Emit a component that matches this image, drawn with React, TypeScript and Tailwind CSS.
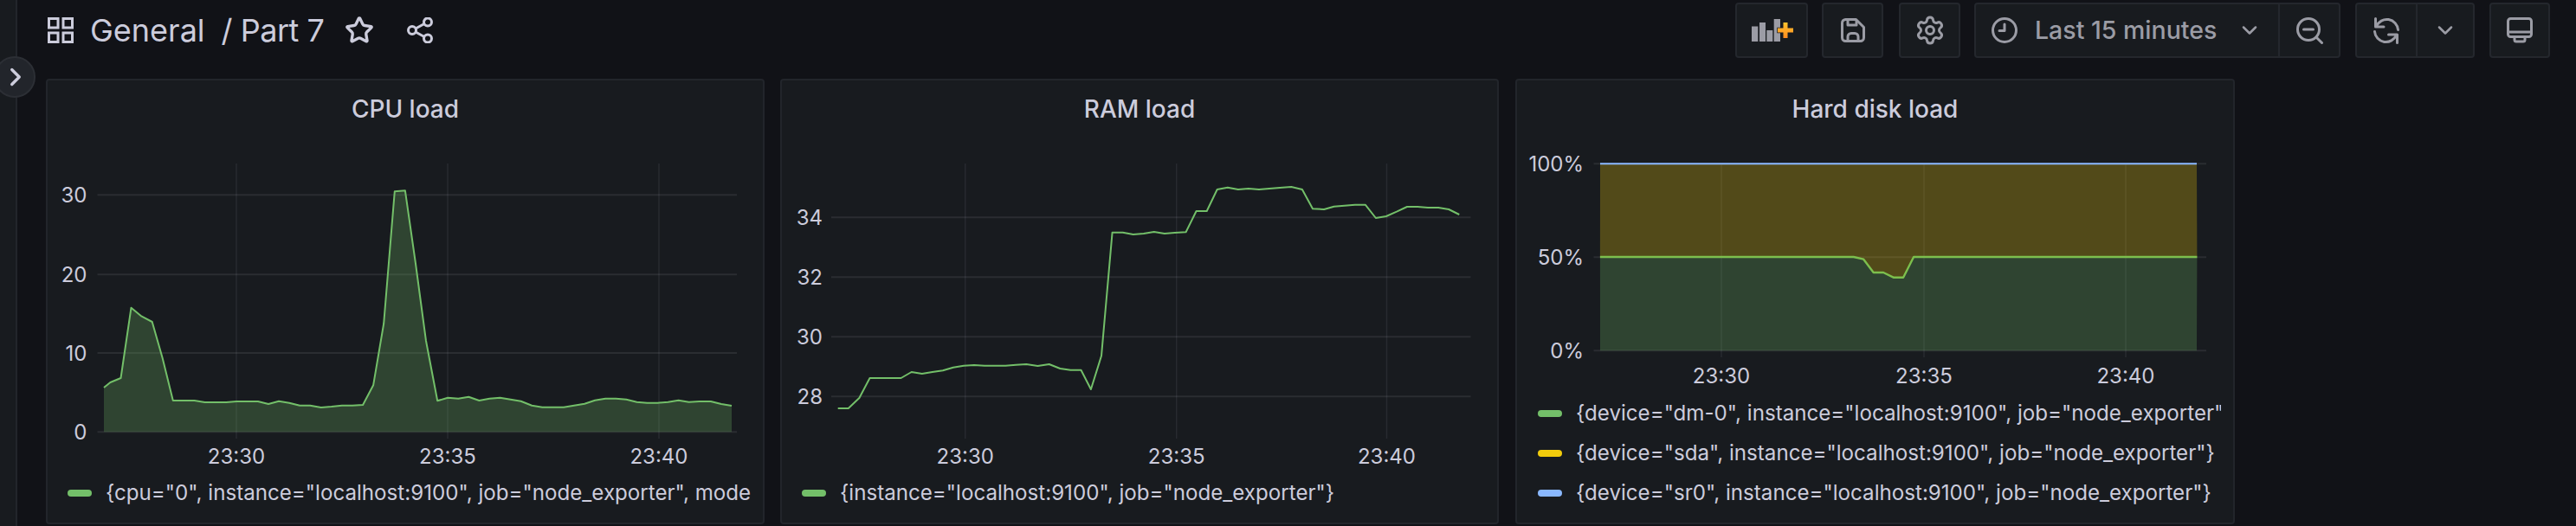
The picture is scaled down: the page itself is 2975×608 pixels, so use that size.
import { Star, Settings, ChevronDown, ChevronRight } from "lucide-react";

// chart points were read off zoomed crops of the screenshot
const sx = (x: number) => x / 1.742;

const cpuRaw: [number, number][] = [
  [209, 432], [222, 414], [243, 399], [264, 155], [285, 185], [306, 204], [327, 330], [348, 477], [370, 477], [391, 477],
  [412, 483], [433, 483], [455, 483], [476, 480], [497, 480], [519, 480], [540, 489], [561, 479], [582, 485], [603, 494],
  [624, 494], [646, 501], [667, 498], [688, 494], [709, 494], [730, 492], [751, 424], [772, 210], [794, -248], [815, -251],
  [836, 0], [857, 270], [880, 478], [901, 467], [922, 470], [943, 464], [964, 477], [985, 470], [1006, 467], [1027, 473],
  [1048, 479], [1070, 494], [1091, 500], [1112, 500], [1134, 500], [1155, 494], [1176, 488], [1197, 476], [1218, 470], [1239, 470],
  [1260, 473], [1281, 482], [1302, 485], [1323, 485], [1344, 482], [1365, 476], [1386, 482], [1407, 480], [1430, 480], [1451, 489], [1472, 495],
];
// panel one starts at x 53, y 91
const cpuPts = cpuRaw.map(([x, y]) => [sx(x) - 53, 304 + y / 3 - 91]);

const ramLow: [number, number][] = [
  [118, 504], [139, 504], [161, 468], [182, 399], [203, 399], [224, 399], [245, 399], [266, 378], [287, 384], [308, 378],
  [329, 373], [350, 362], [371, 356], [392, 354], [413, 356], [434, 356], [455, 356], [476, 353], [497, 351], [520, 357],
  [543, 351], [565, 366], [586, 371], [607, 371], [627, 438], [648, 322],
];
const ramHigh: [number, number][] = [
  [670, 566], [691, 566], [712, 573], [733, 570], [754, 564], [775, 570], [796, 567], [818, 565], [839, 492], [860, 492],
  [881, 417], [902, 410], [923, 417], [944, 414], [965, 417], [986, 414], [1007, 411], [1030, 408], [1052, 417], [1073, 484],
  [1096, 486], [1116, 476], [1137, 473], [1158, 470], [1179, 470], [1200, 516], [1221, 510], [1242, 494], [1263, 477], [1284, 477],
  [1305, 480], [1326, 480], [1347, 486], [1368, 504],
];
const ramPts = [
  ...ramLow.map(([x, y]) => [sx(x) + 900 - 901, 304 + y / 3 - 91]),
  ...ramHigh.map(([x, y]) => [sx(x) + 900 - 901, 80 + y / 3 - 91]),
];

const diskRaw: [number, number][] = [
  [188, 651], [698, 651], [718, 659], [738, 705], [758, 705], [778, 722], [798, 722], [819, 651], [1389, 651],
];
const diskPts = diskRaw.map(([x, y]) => [sx(x) + 1740 - 1750, 80 + y / 3 - 91]);

const toPath = (pts: number[][]) => pts.map(([x, y]) => `${x.toFixed(1)},${y.toFixed(1)}`).join(" ");

type Tick = { label: string; pos: number };

function Axes({
  gridLeft,
  gridRight,
  labelRight,
  yTicks,
  xTicks,
  top,
  bottom,
  labelY,
}: {
  gridLeft: number;
  gridRight: number;
  labelRight: number;
  yTicks: Tick[];
  xTicks: Tick[];
  top: number;
  bottom: number;
  labelY: number;
}) {
  return (
    <>
      {yTicks.map((t) => (
        <g key={t.label}>
          <line x1={gridLeft} x2={gridRight} y1={t.pos} y2={t.pos} stroke="#ccccdc" strokeOpacity={0.1} strokeWidth={2} />
          <text x={labelRight} y={t.pos + 9} textAnchor="end" fill="#ccccdc" fontSize={24}>
            {t.label}
          </text>
        </g>
      ))}
      {xTicks.map((t) => (
        <g key={t.label}>
          <line x1={t.pos} x2={t.pos} y1={top} y2={bottom} stroke="#ccccdc" strokeOpacity={0.09} strokeWidth={1.5} />
          <text x={t.pos} y={labelY} textAnchor="middle" fill="#ccccdc" fontSize={24}>
            {t.label}
          </text>
        </g>
      ))}
    </>
  );
}

// viewBox keeps the coordinates relative to the panel's outer corner
function Chart({ height, children }: { height: number; children: React.ReactNode }) {
  return (
    <svg width={826} height={height} viewBox={`2 57 826 ${height}`} className="block shrink-0 font-['Inter',sans-serif]">
      {children}
    </svg>
  );
}

function LegendItem({ color, label }: { color: string; label: string }) {
  return (
    <div className="flex h-[46px] items-center overflow-hidden whitespace-nowrap">
      <span className="mr-4 h-2 w-7 shrink-0 rounded-sm" style={{ backgroundColor: color }} />
      <span className="text-[24.15px] leading-[36px] text-[#ccccdc]">{label}</span>
    </div>
  );
}

function Panel({
  title,
  className,
  legendClass,
  chart,
  children,
}: {
  title: string;
  className: string;
  legendClass: string;
  chart: React.ReactNode;
  children: React.ReactNode;
}) {
  return (
    <section className={`flex h-[515px] shrink-0 flex-col rounded-[4px] border-2 border-[#22252b] bg-[#181b1f] ${className}`}>
      <h2 className="mt-[11px] h-[44px] shrink-0 text-center text-[28px] leading-[44px] font-medium text-[#ccccdc]">{title}</h2>
      {chart}
      <div className={`mt-auto flex flex-col pr-[14px] pb-[11px] ${legendClass}`}>{children}</div>
    </section>
  );
}

function ToolButton({ className, children }: { className: string; children: React.ReactNode }) {
  return (
    <div className={`flex h-16 items-center justify-center rounded-[4px] border-2 border-[#24272d] bg-[#181b1f] text-[#9b9ca5] ${className}`}>
      {children}
    </div>
  );
}

function AddPanelIcon() {
  return (
    <svg width={48} height={28} viewBox="0 0 48 28" className="ml-[2px]">
      <defs>
        <linearGradient id="plusFill" x1="0" y1="0" x2="0" y2="1">
          <stop offset="0" stopColor="#ffc42e" />
          <stop offset="1" stopColor="#ff8a1f" />
        </linearGradient>
      </defs>
      <path fill="#9b9ca5" d="M0 9.5h7.3V27H0zM9 5h7v22H9zM17.3 14h7v13h-7zM25.7 1h7.3v26h-7.3z" />
      <path
        d="M36.5 5h5v6.5H48v5h-6.5V23h-5v-6.5H30v-5h6.5z"
        fill="url(#plusFill)"
        stroke="#181b1f"
        strokeWidth={1.5}
        paintOrder="stroke"
      />
    </svg>
  );
}

function SaveIcon() {
  return (
    <svg width={28} height={28} viewBox="0 0 28 28" fill="none" stroke="currentColor" strokeWidth={3} strokeLinejoin="round" strokeLinecap="round">
      <path d="M5.5 1.5h12l9 9v12a4 4 0 0 1-4 4h-17a4 4 0 0 1-4-4v-17a4 4 0 0 1 4-4z" />
      <path d="M8 1.5v6.5h10v-5" />
      <path d="M8 26.5v-5a4 4 0 0 1 4-4h4a4 4 0 0 1 4 4v5" />
    </svg>
  );
}

function ClockIcon() {
  return (
    <svg width={30} height={30} viewBox="0 0 30 30" className="shrink-0" fill="none" stroke="currentColor" strokeWidth={3} strokeLinecap="round" strokeLinejoin="round">
      <circle cx={15} cy={15} r={13.5} />
      <path d="M15 8v7.5H9" />
    </svg>
  );
}

function ZoomOutIcon() {
  return (
    <svg width={31} height={31} viewBox="0 0 31 31" fill="none" stroke="currentColor" strokeWidth={3} strokeLinecap="round">
      <circle cx={14} cy={14} r={12.5} />
      <path d="M8.5 14h11M23.5 23.5l6 6" />
    </svg>
  );
}

function RefreshIcon() {
  return (
    <svg width={30} height={31} viewBox="0 0 30 31" fill="none" stroke="currentColor" strokeWidth={3} strokeLinecap="round" strokeLinejoin="round">
      <path d="M2.5 1.5v9.5H12" />
      <path d="M3.5 10.5A13 13 0 0 1 28.5 14.5" />
      <path d="M27.5 29.5V20H17.5" />
      <path d="M1.5 16.5A13 13 0 0 0 26.5 20.5" />
    </svg>
  );
}

function MonitorIcon() {
  return (
    <svg width={30} height={30} viewBox="0 0 30 30" fill="none" stroke="currentColor" strokeWidth={3} strokeLinecap="round" strokeLinejoin="round">
      <rect x={1.5} y={1.5} width={27} height={21} rx={3} />
      <path d="M1.5 17h27" />
      <path d="M9 23v3a2 2 0 0 0 2 2h8a2 2 0 0 0 2-2v-3" />
    </svg>
  );
}

export default function App() {
  const cpuFill = `${toPath(cpuPts)} ${(845 - 53).toFixed(1)},408.3 ${(120 - 53).toFixed(1)},408.3`;
  const greenFill = `${toPath(diskPts)} ${(2537 - 1750).toFixed(1)},314.3 ${(1848 - 1750).toFixed(1)},314.3`;
  const yellowFill = `${(1848 - 1750).toFixed(1)},98.3 ${(2537 - 1750).toFixed(1)},98.3 ${toPath([...diskPts].reverse())}`;

  return (
    <div className="relative flex h-[608px] w-[2975px] overflow-hidden bg-[#111217] font-['Inter',sans-serif]">
      <aside className="h-full w-5 shrink-0 border-r-2 border-[#22252b] bg-[#181b1f]" />
      <button className="absolute left-[-7px] top-[65px] z-20 flex h-12 w-12 items-center justify-center rounded-full border-2 border-[#2c2f35] bg-[#22252b] pl-[1px] text-[#ccccdc]">
        <ChevronRight size={34} strokeWidth={2.4} />
      </button>

      <main className="min-w-0 flex-1 pl-[33px]">
        <header className="flex h-[91px] items-start">
          <div className="mt-[20px] flex h-[30px] items-center text-[#ccccdc]">
            <svg width={30} height={30} viewBox="0 0 30 30" className="ml-[2px] shrink-0" fill="none" stroke="#ccccdc" strokeWidth={3}>
              <rect x={1.5} y={1.5} width={10.5} height={10.5} />
              <rect x={18} y={1.5} width={10.5} height={10.5} />
              <rect x={1.5} y={18} width={10.5} height={10.5} />
              <rect x={18} y={18} width={10.5} height={10.5} />
            </svg>
            <span className="ml-[19px] text-[36px] leading-none">General</span>
            <span className="ml-[19px] text-[36px] leading-none tracking-[-0.5px]">/ Part 7</span>
            <Star size={34} strokeWidth={2.4} className="ml-[24px] shrink-0" />
            <svg width={30} height={30} viewBox="0 0 30 30" className="ml-[38px] shrink-0" fill="none" stroke="#ccccdc" strokeWidth={3}>
              <circle cx={6} cy={15} r={4.5} />
              <circle cx={24} cy={5.5} r={4.5} />
              <circle cx={24} cy={24.5} r={4.5} />
              <path d="M10 13 L20 7.5 M10 17 L20 22.5" />
            </svg>
          </div>

          <div className="ml-auto mr-[30px] mt-[3px] flex">
            <ToolButton className="w-[84px]">
              <AddPanelIcon />
            </ToolButton>
            <ToolButton className="ml-4 w-[71px]">
              <SaveIcon />
            </ToolButton>
            <ToolButton className="ml-[18px] w-[71px]">
              <Settings size={36} strokeWidth={2} />
            </ToolButton>
            <div className="ml-4 flex h-16 w-[423px] rounded-[4px] border-2 border-[#24272d] bg-[#181b1f] text-[#9b9ca5]">
              <div className="flex flex-1 items-center border-r-2 border-[#24272d] pl-[18px]">
                <ClockIcon />
                <span className="ml-[20px] text-[28.5px] font-medium whitespace-nowrap">Last 15 minutes</span>
                <ChevronDown size={28} strokeWidth={2.2} className="ml-[24px] shrink-0" />
              </div>
              <div className="flex w-[68px] items-center justify-center">
                <ZoomOutIcon />
              </div>
            </div>
            <div className="ml-[17px] flex h-16 w-[138px] rounded-[4px] border-2 border-[#24272d] bg-[#181b1f] text-[#9b9ca5]">
              <div className="flex w-[70px] items-center justify-center border-r-2 border-[#24272d]">
                <RefreshIcon />
              </div>
              <div className="flex flex-1 items-center justify-center">
                <ChevronDown size={28} strokeWidth={2.2} />
              </div>
            </div>
            <ToolButton className="ml-[17px] w-[70px]">
              <MonitorIcon />
            </ToolButton>
          </div>
        </header>

        <div className="flex gap-[18px]">
          <Panel
            title="CPU load"
            className="w-[830px]"
            legendClass="pl-[23px]"
            chart={
              <Chart height={399}>
                <Axes
                  gridLeft={59.5}
                  gridRight={798}
                  labelRight={47.5}
                  top={98}
                  bottom={416}
                  labelY={445}
                  yTicks={[
                    { label: "30", pos: 134.3 },
                    { label: "20", pos: 226.3 },
                    { label: "10", pos: 317 },
                    { label: "0", pos: 408.3 },
                  ]}
                  xTicks={[
                    { label: "23:30", pos: 220 },
                    { label: "23:35", pos: 464 },
                    { label: "23:40", pos: 708 },
                  ]}
                />
                <polygon points={cpuFill} fill="#73bf69" fillOpacity={0.25} />
                <polyline points={toPath(cpuPts)} fill="none" stroke="#73bf69" strokeWidth={2} strokeLinejoin="round" />
              </Chart>
            }
          >
            <LegendItem color="#73bf69" label={'{cpu="0", instance="localhost:9100", job="node_exporter", mode="idle"}'} />
          </Panel>

          <Panel
            title="RAM load"
            className="mr-px w-[830px]"
            legendClass="pl-[23px]"
            chart={
              <Chart height={399}>
                <Axes
                  gridLeft={59}
                  gridRight={797.5}
                  labelRight={49}
                  top={98}
                  bottom={416}
                  labelY={445}
                  yTicks={[
                    { label: "34", pos: 160.3 },
                    { label: "32", pos: 229.3 },
                    { label: "30", pos: 298.3 },
                    { label: "28", pos: 367.3 },
                  ]}
                  xTicks={[
                    { label: "23:30", pos: 213.7 },
                    { label: "23:35", pos: 457.7 },
                    { label: "23:40", pos: 700.5 },
                  ]}
                />
                <polyline points={toPath(ramPts)} fill="none" stroke="#73bf69" strokeWidth={2} strokeLinejoin="round" />
              </Chart>
            }
          >
            <LegendItem color="#73bf69" label={'{instance="localhost:9100", job="node_exporter"}'} />
          </Panel>

          <Panel
            title="Hard disk load"
            className="w-[831px]"
            legendClass="pl-[24px]"
            chart={
              <Chart height={303}>
                <Axes
                  gridLeft={90.5}
                  gridRight={798}
                  labelRight={79}
                  top={98}
                  bottom={322}
                  labelY={352}
                  yTicks={[
                    { label: "100%", pos: 98.3 },
                    { label: "50%", pos: 206.3 },
                    { label: "0%", pos: 314.3 },
                  ]}
                  xTicks={[
                    { label: "23:30", pos: 238 },
                    { label: "23:35", pos: 472 },
                    { label: "23:40", pos: 705 },
                  ]}
                />
                <polygon points={yellowFill} fill="#f2cc0c" fillOpacity={0.27} />
                <polygon points={greenFill} fill="#73bf69" fillOpacity={0.25} />
                <polyline points={toPath(diskPts)} fill="none" stroke="#7cbf4d" strokeWidth={2.4} strokeLinejoin="round" />
                <line x1={98} x2={787} y1={98.3} y2={98.3} stroke="#8ab8ff" strokeWidth={2} />
              </Chart>
            }
          >
            <LegendItem color="#73bf69" label={'{device="dm-0", instance="localhost:9100", job="node_exporter"}'} />
            <LegendItem color="#f2cc0c" label={'{device="sda", instance="localhost:9100", job="node_exporter"}'} />
            <LegendItem color="#8ab8ff" label={'{device="sr0", instance="localhost:9100", job="node_exporter"}'} />
          </Panel>
        </div>
      </main>
    </div>
  );
}
